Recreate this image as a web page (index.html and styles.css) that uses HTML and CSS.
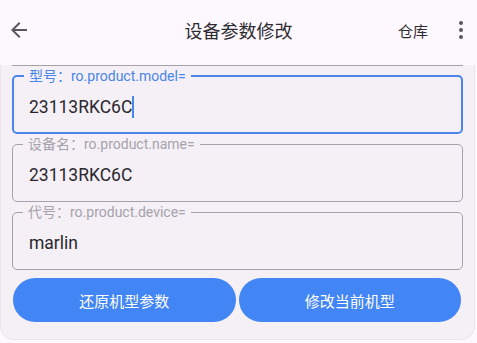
FILE: index.html
```html
<!DOCTYPE html>
<html lang="zh-CN">
<head>
<meta charset="utf-8">
<title>设备参数修改</title>
<link rel="stylesheet" href="styles.css">
</head>
<body>
<header class="bar">
  <div class="bar-left">
    <span class="icon-btn">
      <svg width="24" height="24" viewBox="0 0 24 24"><path d="M20 11H7.83l5.59-5.59L12 4l-8 8 8 8 1.41-1.41L7.83 13H20v-2z" fill="#5a5660"/></svg>
    </span>
  </div>
  <h1 class="title">设备参数修改</h1>
  <div class="bar-right">
    <span class="action">仓库</span>
    <span class="icon-btn more">
      <svg width="24" height="24" viewBox="0 0 24 24"><circle cx="12" cy="5" r="2" fill="#5a5660"/><circle cx="12" cy="12" r="2" fill="#5a5660"/><circle cx="12" cy="19" r="2" fill="#5a5660"/></svg>
    </span>
  </div>
</header>
<main class="card">
  <div class="stub"></div>
  <fieldset class="field focused">
    <legend>型号：ro.product.model=</legend>
    <div class="value">23113RKC6C<span class="caret"></span></div>
  </fieldset>
  <fieldset class="field">
    <legend>设备名：ro.product.name=</legend>
    <div class="value">23113RKC6C</div>
  </fieldset>
  <fieldset class="field">
    <legend>代号：ro.product.device=</legend>
    <div class="value">marlin</div>
  </fieldset>
  <div class="buttons">
    <button class="btn">还原机型参数</button>
    <button class="btn">修改当前机型</button>
  </div>
</main>
</body>
</html>
```
FILE: styles.css
```css
* { box-sizing: border-box; }
html, body {
  margin: 0;
  padding: 0;
  background: #fdf8fd;
  font-family: Roboto, "Noto Sans CJK SC", sans-serif;
  color: #2a282e;
  width: 477px;
  height: 343px;
  overflow: hidden;
}
.bar {
  height: 65px;
  display: grid;
  grid-template-columns: 1fr auto 1fr;
  align-items: center;
  padding-bottom: 5px;
  background: #fdf8fd;
}
.bar-left { display: flex; align-items: center; padding-left: 7px; }
.icon-btn { display: flex; width: 24px; height: 24px; }
.title {
  margin: 0;
  font-size: 18px;
  font-weight: 400;
  color: #2e2c32;
}
.bar-right {
  display: flex;
  align-items: center;
  justify-content: flex-end;
  padding-right: 4px;
}
.action {
  font-size: 15px;
  color: #2e2c32;
  margin-right: 21px;
}
.card {
  background: #f4f0f6;
  margin: 0 2px 3px 0;
  height: 275px;
  border-radius: 0 0 14px 14px;
  border: 1px solid #ebe6ee;
  border-top: none;
  display: flex;
  flex-direction: column;
}
.stub {
  height: 1px;
  margin: 0 11px 0 11px;
  border: 1px solid #a5a1aa;
  border-top: none;
  border-radius: 0 0 4px 4px;
}
.field {
  margin: 2px 11px 0 11px;
  border: 1px solid #a5a1aa;
  border-radius: 5px;
  padding: 0 16px 14px 16px;
  min-width: 0;
}
.field:first-of-type { margin-top: 2px; }
.field legend {
  font-size: 14px;
  line-height: 16px;
  color: #a6a2ab;
  padding: 0 5px;
  margin-left: -6px;
}
.field.focused {
  border: 2px solid #4a85e8;
  padding: 0 15px 13px 15px;
}
.field.focused legend { color: #4a85e8; margin-left: -5px; }
.value {
  font-size: 17.5px;
  line-height: 24px;
  padding-top: 11px;
  color: #2a282e;
  display: flex;
  align-items: center;
}
.caret {
  display: inline-block;
  width: 2px;
  height: 22px;
  background: #4a85e8;
}
.buttons {
  display: flex;
  gap: 3px;
  padding: 0 13px 0 12px;
  margin-top: 8px;
}
.btn {
  flex: 1;
  height: 44px;
  border: none;
  border-radius: 22px;
  background: #4285f4;
  color: #fff;
  font-family: Roboto, "Noto Sans CJK SC", sans-serif;
  font-size: 15px;
}
```
